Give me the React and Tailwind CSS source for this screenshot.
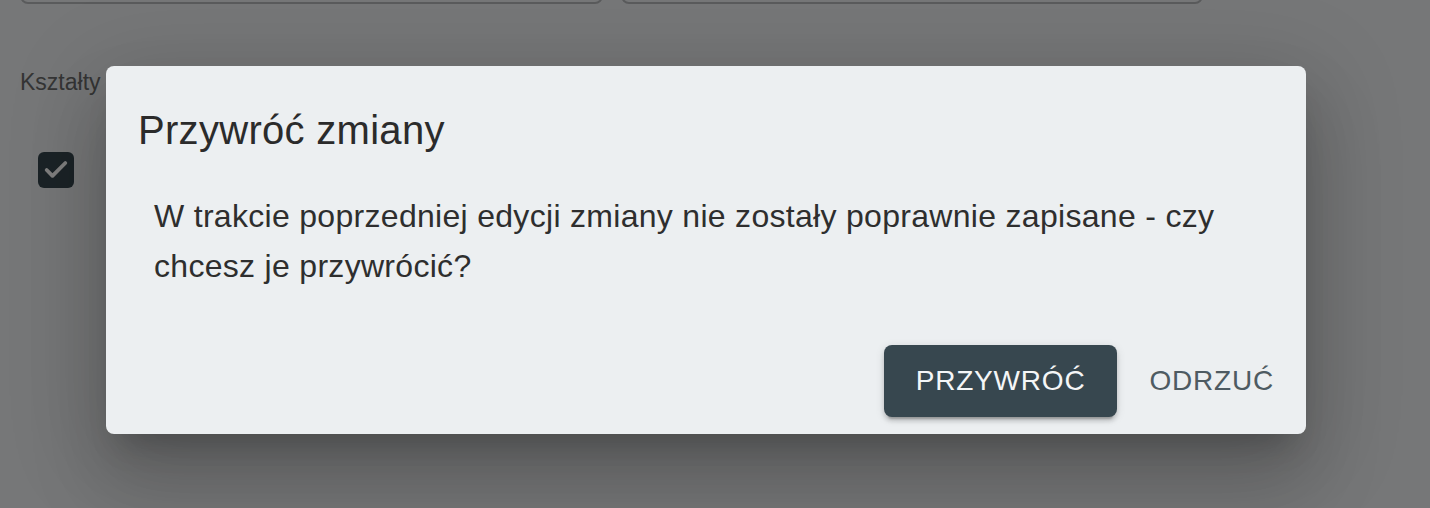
import { Check } from "lucide-react";

const font = { fontFamily: '"Liberation Sans", Arial, sans-serif' };

/** strona pod dialogiem (przyciemniona przez backdrop) */
function PageBehind() {
  return (
    <div className="flex flex-col">
      {/* pola formularza u góry, ucięte */}
      <div className="-mt-[60px] flex gap-[18px] pl-[20px]">
        <div className="h-[64px] w-[583px] rounded-[8px] border-2 border-[#b4b6b8]" />
        <div className="h-[64px] w-[582px] rounded-[8px] border-2 border-[#b4b6b8]" />
      </div>

      <div className="mt-[62px] pl-[20px] text-[23px] leading-[32px] text-[#6b6b6b]">Kształty</div>

      <div className="mt-[54px] flex items-center pl-[38px]">
        <div className="flex h-[36px] w-[36px] items-center justify-center rounded-[6px] bg-[#37474f]">
          <Check size={28} strokeWidth={3.2} color="#ffffff" />
        </div>
      </div>
    </div>
  );
}

function RestoreDialog() {
  return (
    <div className="flex h-[368px] w-[1200px] flex-col rounded-[8px] bg-[#eceff1] shadow-[0_22px_30px_-14px_rgba(0,0,0,0.2),0_48px_76px_6px_rgba(0,0,0,0.14),0_18px_92px_16px_rgba(0,0,0,0.12)]">
      <h2 className="px-[32px] pt-[32px] text-[40px] leading-[64px] tracking-[0.3px] text-[#2b2b2b]">Przywróć zmiany</h2>

      <div className="px-[48px] pt-[29px] pb-[38px]">
        <p className="text-[32px] leading-[50px] tracking-[0.3px] text-[#2e2e2e]">
          W trakcie poprzedniej edycji zmiany nie zostały poprawnie zapisane - czy chcesz je przywrócić?
        </p>
      </div>

      <div className="flex items-center justify-end gap-[15px] py-[16px] pr-[15px] pl-[16px]">
        <button className="flex h-[72px] items-center rounded-[8px] bg-[#37474f] px-[32px] text-[28px] tracking-[0.8px] text-[#f4f6f7] uppercase shadow-[0_6px_2px_-4px_rgba(0,0,0,0.2),0_4px_4px_0_rgba(0,0,0,0.14),0_2px_10px_0_rgba(0,0,0,0.12)]">
          Przywróć
        </button>
        <button className="flex h-[72px] items-center rounded-[8px] px-[17px] text-[28px] tracking-[0.8px] text-[#4e5b62] uppercase">
          Odrzuć
        </button>
      </div>
    </div>
  );
}

export default function App() {
  return (
    <div className="relative h-[508px] w-[1430px] overflow-hidden bg-[#eceff1]" style={font}>
      <PageBehind />

      {/* backdrop + dialog */}
      <div className="absolute inset-0 flex items-start bg-black/50 pt-[66px] pl-[106px]">
        <RestoreDialog />
      </div>
    </div>
  );
}
